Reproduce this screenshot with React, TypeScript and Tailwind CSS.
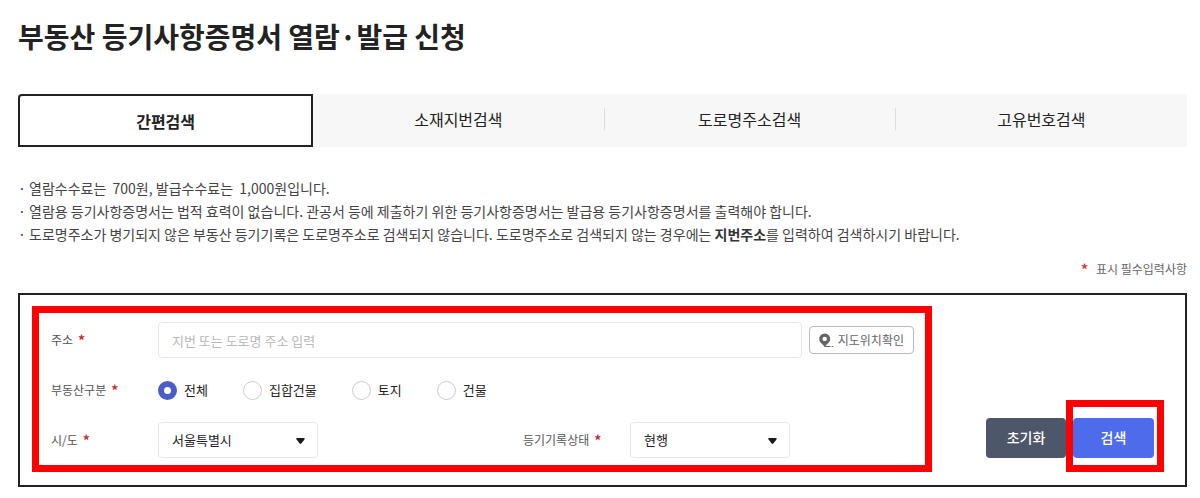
import { useState } from "react";
import type { ReactNode } from "react";
import clsx from "clsx";

const tabs = ["간편검색", "소재지번검색", "도로명주소검색", "고유번호검색"];
const kinds = ["전체", "집합건물", "토지", "건물"];

function Label({ htmlFor, children }: { htmlFor: string; children: ReactNode }) {
  return (
    <label
      htmlFor={htmlFor}
      className="flex w-[107px] shrink-0 gap-[5px] text-xs leading-5 text-[#555]"
    >
      {children}
      <span className="text-sm font-bold leading-5 text-[#c62f33]">*</span>
    </label>
  );
}

function Select({ id, options }: { id: string; options: string[] }) {
  return (
    <div className="relative w-40">
      <select
        id={id}
        className="h-9 w-full appearance-none rounded border border-[#e6e6e6] bg-white px-[13px] text-[13px] text-[#222]"
      >
        {options.map((o) => (
          <option key={o}>{o}</option>
        ))}
      </select>
      <svg
        className="pointer-events-none absolute right-[13px] top-4 h-[6px] w-[9px]"
        viewBox="0 0 9 6"
        fill="#1a1a1a"
      >
        <path d="M1.2 0h6.6c.9 0 1.2.8.7 1.4L5.3 5.5c-.4.6-1.2.6-1.6 0L.5 1.4C0 .8.3 0 1.2 0z" />
      </svg>
    </div>
  );
}

function MapPin() {
  return (
    <svg width="15" height="15" viewBox="0 0 15 15" fill="none">
      <path
        d="M5.700 0.500a5.500 5.500 0 0 0-5.500 5.500c0 3.600 3.400 4.600 5.500 8 2.100-3.400 5.500-4.400 5.500-8A5.500 5.500 0 0 0 5.700 .5zm0 3.200a2.200 2.200 0 1 1 0 4.400 2.200 2.200 0 0 1 0-4.400z"
        fill="#666"
        fillRule="evenodd"
      />
      <path d="M5.500 13.500h6M12.700 13.500h1.600" stroke="#666" />
    </svg>
  );
}

export default function App() {
  const [tab, setTab] = useState(0);
  const [kind, setKind] = useState(kinds[0]);

  return (
    <main className="bg-white pb-3 pl-[18px] pr-[13px] pt-4 font-['Noto_Sans_CJK_KR',sans-serif] text-[#222]">
      <h1 className="text-[28px] font-bold leading-10">부동산 등기사항증명서 열람·발급 신청</h1>

      <div role="tablist" className="mt-[38px] flex h-[53px] bg-[#f7f7f7]">
        {tabs.map((name, i) => (
          <button
            key={name}
            role="tab"
            aria-selected={tab === i}
            onClick={() => setTab(i)}
            className={clsx(
              "flex flex-1 items-center text-base",
              tab === i
                ? "rounded-tl border-2 border-[#222] bg-white font-bold"
                : "pb-[3px] font-normal",
            )}
          >
            <span
              className={clsx(
                "flex-1 leading-[22px]",
                tab !== i && i < tabs.length - 1 && "border-r border-[#ddd]",
              )}
            >
              {name}
            </span>
          </button>
        ))}
      </div>

      <ul className="mt-[30px] text-sm leading-[23px] text-[#444]">
        <li className="flex gap-1.5">
          <span className="w-[5px]">·</span>
          <p>열람수수료는&nbsp; 700원, 발급수수료는&nbsp; 1,000원입니다.</p>
        </li>
        <li className="flex gap-1.5">
          <span className="w-[5px]">·</span>
          <p>
            열람용 등기사항증명서는 법적 효력이 없습니다. 관공서 등에 제출하기 위한 등기사항증명서는
            발급용 등기사항증명서를 출력해야 합니다.
          </p>
        </li>
        <li className="flex gap-1.5">
          <span className="w-[5px]">·</span>
          <p>
            도로명주소가 병기되지 않은 부동산 등기기록은 도로명주소로 검색되지 않습니다. 도로명주소로
            검색되지 않는 경우에는 <b className="font-bold text-[#333]">지번주소</b>를 입력하여
            검색하시기 바랍니다.
          </p>
        </li>
      </ul>

      <p className="mt-[13px] flex justify-end gap-2 text-xs leading-5 text-[#666]">
        <span className="text-sm font-bold leading-5 text-[#d8323a]">*</span>표시 필수입력사항
      </p>

      <form
        onSubmit={(e) => e.preventDefault()}
        className="mt-[14px] flex items-end border-2 border-[#222] pb-[13px] pl-3 pr-[21px] pt-[11px]"
      >
        <div className="mr-[54px] flex flex-1 flex-col gap-[14px] border-7 border-[#f00] pb-[7px] pl-3 pr-[11px] pt-[9px]">
          <div className="flex items-center">
            <Label htmlFor="address">주소</Label>
            <input
              id="address"
              type="text"
              placeholder="지번 또는 도로명 주소 입력"
              className="h-9 min-w-0 flex-1 rounded border border-[#e6e6e6] px-[13px] text-[13px] placeholder:text-[#b8b8b8]"
            />
            <button
              type="button"
              className="ml-[7px] flex h-7 items-center gap-1 rounded border border-[#bbb] px-[9px] text-xs text-[#666]"
            >
              <MapPin />
              지도위치확인
            </button>
          </div>

          <div className="flex h-9 items-center" role="radiogroup" aria-label="부동산구분">
            <Label htmlFor="kind-0">부동산구분</Label>
            <div className="flex gap-[35px]">
              {kinds.map((k, i) => (
                <label key={k} className="flex items-center gap-[7px] text-[13px]">
                  <input
                    id={`kind-${i}`}
                    type="radio"
                    name="kind"
                    checked={kind === k}
                    onChange={() => setKind(k)}
                    className="size-[19px] appearance-none rounded-full border border-[#ccc] bg-white checked:border-6 checked:border-[#4a5dc4]"
                  />
                  {k}
                </label>
              ))}
            </div>
          </div>

          <div className="grid grid-cols-[472fr_391fr]">
            <div className="flex items-center">
              <Label htmlFor="city">시/도</Label>
              <Select id="city" options={["서울특별시", "부산광역시", "대구광역시"]} />
            </div>
            <div className="flex items-center">
              <Label htmlFor="status">등기기록상태</Label>
              <Select id="status" options={["현행", "폐쇄", "현행+폐쇄"]} />
            </div>
          </div>
        </div>

        <div className="flex items-end">
          <button
            type="reset"
            className="mb-[14px] h-10 w-20 rounded bg-[#4e5669] pb-0.5 text-sm font-medium text-white"
          >
            초기화
          </button>
          <div className="border-7 border-[#f00] pb-[7px] pr-[3px] pt-[11px]">
            <button
              type="submit"
              className="block h-10 w-[81px] rounded bg-[#4e6bec] pb-0.5 text-sm font-medium text-white"
            >
              검색
            </button>
          </div>
        </div>
      </form>
    </main>
  );
}
